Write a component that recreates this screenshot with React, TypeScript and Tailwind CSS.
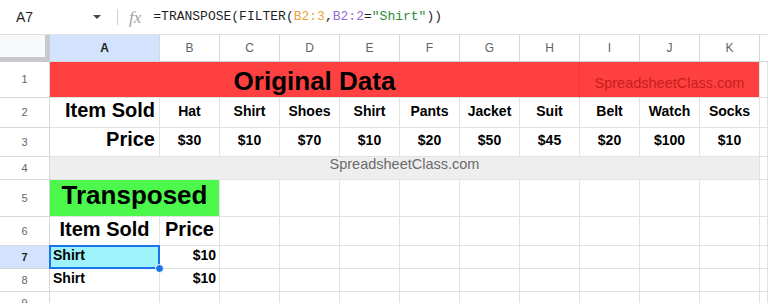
import React from "react";

// sheet geometry
const COLS = ["A", "B", "C", "D", "E", "F", "G", "H", "I", "J", "K"];
const ITEMS = ["Hat", "Shirt", "Shoes", "Shirt", "Pants", "Jacket", "Suit", "Belt", "Watch", "Socks"];
const PRICES = ["$30", "$10", "$70", "$10", "$20", "$50", "$45", "$20", "$100", "$10"];

const cellBorder = "border-r border-b border-[#e2e2e2]";
const headBorder = "border-r border-b border-[#d5d7d9]";

interface CellProps {
    className?: string;
    children?: React.ReactNode;
}

const Cell: React.FC<CellProps> = ({className = "", children}) => {
    return <div className={`${cellBorder} flex items-end min-w-0 overflow-hidden ${className}`}>{children}</div>;
};

const RowHead: React.FC<{ n: number; active?: boolean }> = ({n, active}) => {
    return (<div
        className={`${headBorder} flex items-center justify-center text-[11px] ${active ? "bg-[#d3e3fd] font-bold text-[#1f1f1f]" : "bg-white text-[#5f6368]"}`}>
        {n}
    </div>);
};

const FormulaBar: React.FC = () => {
    return (<div className="h-[35px] flex items-center border-b border-[#e0e0e0] bg-white">
        <div className="w-[110px] pl-[16px] flex items-center text-[14px] text-[#1f1f1f]">
            <span className="flex-1">A7</span>
            <span className="mr-[9px] w-0 h-0 border-l-[4px] border-r-[4px] border-t-[4px] border-l-transparent border-r-transparent border-t-[#444746]"/>
        </div>
        <div className="w-px h-[16px] bg-[#d0d0d0] ml-[7px]"/>
        <span className="ml-[11px] text-[17px] italic text-[#a0a4a8] font-['Liberation_Serif',serif] leading-none">fx</span>
        <div className="ml-[12px] text-[13px] text-[#1f1f1f] font-['Liberation_Mono',monospace] whitespace-pre">
            =TRANSPOSE(FILTER(<span className="text-[#e8a33c]">B2:3</span>,<span
            className="text-[#9a6ad6]">B2:2</span>=<span className="text-[#2e8b3a]">"Shirt"</span>))
        </div>
    </div>);
};

export default function App() {
    return (<div className="w-[768px] h-[303px] overflow-hidden bg-white font-['Liberation_Sans',Arial,sans-serif]">
        <FormulaBar/>
        <div
            className="grid grid-cols-[50px_110px_repeat(10,60px)_8px] grid-rows-[27px_36px_30px_29px_23px_37px_29px_23px_23px_23px]">
            {/* column headers */}
            <div className="bg-[#f8f9fa] border-r-[5px] border-b-[5px] border-[#c7c9cc]"/>
            {COLS.map((c) => (
                <div key={c}
                     className={`${headBorder} flex items-center justify-center text-[12px] ${c === "A" ? "bg-[#d3e3fd] font-bold text-[#1f1f1f]" : "bg-white text-[#5f6368]"}`}>
                    {c}
                </div>))}
            <div className="border-b border-[#d5d7d9]"/>

            {/* row 1 */}
            <RowHead n={1}/>
            <div className="col-span-8 bg-[#ff4040] border-r border-r-[#ee3a3a] border-b border-b-[#e2e2e2] flex justify-center items-center pt-[3px]">
                <span className="text-[26px] font-bold text-black">Original Data</span>
            </div>
            <Cell className="col-span-3 bg-[#ff4040] justify-center items-center pb-[2px]">
                <span className="text-[14.5px] text-[#c81e1e]">SpreadsheetClass.com</span>
            </Cell>
            <Cell/>

            {/* row 2 */}
            <RowHead n={2}/>
            <Cell className="justify-end pr-[4px] pb-[2px]">
                <span className="text-[20px] font-bold">Item Sold</span>
            </Cell>
            {ITEMS.map((it, i) => (
                <Cell key={i} className="justify-center pb-[5px]">
                    <span className="text-[14px] font-bold">{it}</span>
                </Cell>))}
            <Cell/>

            {/* row 3 */}
            <RowHead n={3}/>
            <Cell className="justify-end pr-[4px] pb-[2px]">
                <span className="text-[20px] font-bold">Price</span>
            </Cell>
            {PRICES.map((p, i) => (
                <Cell key={i} className="justify-center pb-[5px]">
                    <span className="text-[14px] font-bold">{p}</span>
                </Cell>))}
            <Cell/>

            {/* row 4 */}
            <RowHead n={4}/>
            <Cell className="col-span-11 bg-[#eeeeee] justify-center pb-[3px]">
                <span className="text-[14.5px] text-[#6b6b6b]">SpreadsheetClass.com</span>
            </Cell>
            <Cell/>

            {/* row 5 */}
            <RowHead n={5}/>
            <Cell className="col-span-2 bg-[#4cf84c] justify-center pb-[1px]">
                <span className="text-[26px] font-bold text-black">Transposed</span>
            </Cell>
            {Array.from({length: 9}).map((_, i) => <Cell key={i}/>)}
            <Cell/>

            {/* row 6 */}
            <RowHead n={6}/>
            <Cell className="justify-center pb-[1px]">
                <span className="text-[20px] font-bold">Item Sold</span>
            </Cell>
            <Cell className="justify-center pb-[1px]">
                <span className="text-[20px] font-bold">Price</span>
            </Cell>
            {Array.from({length: 9}).map((_, i) => <Cell key={i}/>)}
            <Cell/>

            {/* row 7 */}
            <RowHead n={7} active/>
            <div className="relative border-r border-b border-[#e2e2e2]">
                <div
                    className="absolute -left-px -top-px right-[-1px] bottom-[-1px] bg-[#9ef3fa] border-2 border-[#1a73e8] flex items-end pl-[2px] pb-[1px]">
                    <span className="text-[14px] font-bold">Shirt</span>
                </div>
                <div
                    className="absolute right-[-5px] bottom-[-5px] w-[9px] h-[9px] rounded-full bg-[#1a73e8] border border-white z-10"/>
            </div>
            <Cell className="justify-end pr-[3px] pb-[2px]">
                <span className="text-[14px] font-bold">$10</span>
            </Cell>
            {Array.from({length: 9}).map((_, i) => <Cell key={i}/>)}
            <Cell/>

            {/* row 8 */}
            <RowHead n={8}/>
            <Cell className="pl-[3px] pb-[2px]">
                <span className="text-[14px] font-bold">Shirt</span>
            </Cell>
            <Cell className="justify-end pr-[3px] pb-[2px]">
                <span className="text-[14px] font-bold">$10</span>
            </Cell>
            {Array.from({length: 9}).map((_, i) => <Cell key={i}/>)}
            <Cell/>

            {/* row 9 */}
            <RowHead n={9}/>
            {Array.from({length: 12}).map((_, i) => <Cell key={i}/>)}
        </div>
    </div>);
}
